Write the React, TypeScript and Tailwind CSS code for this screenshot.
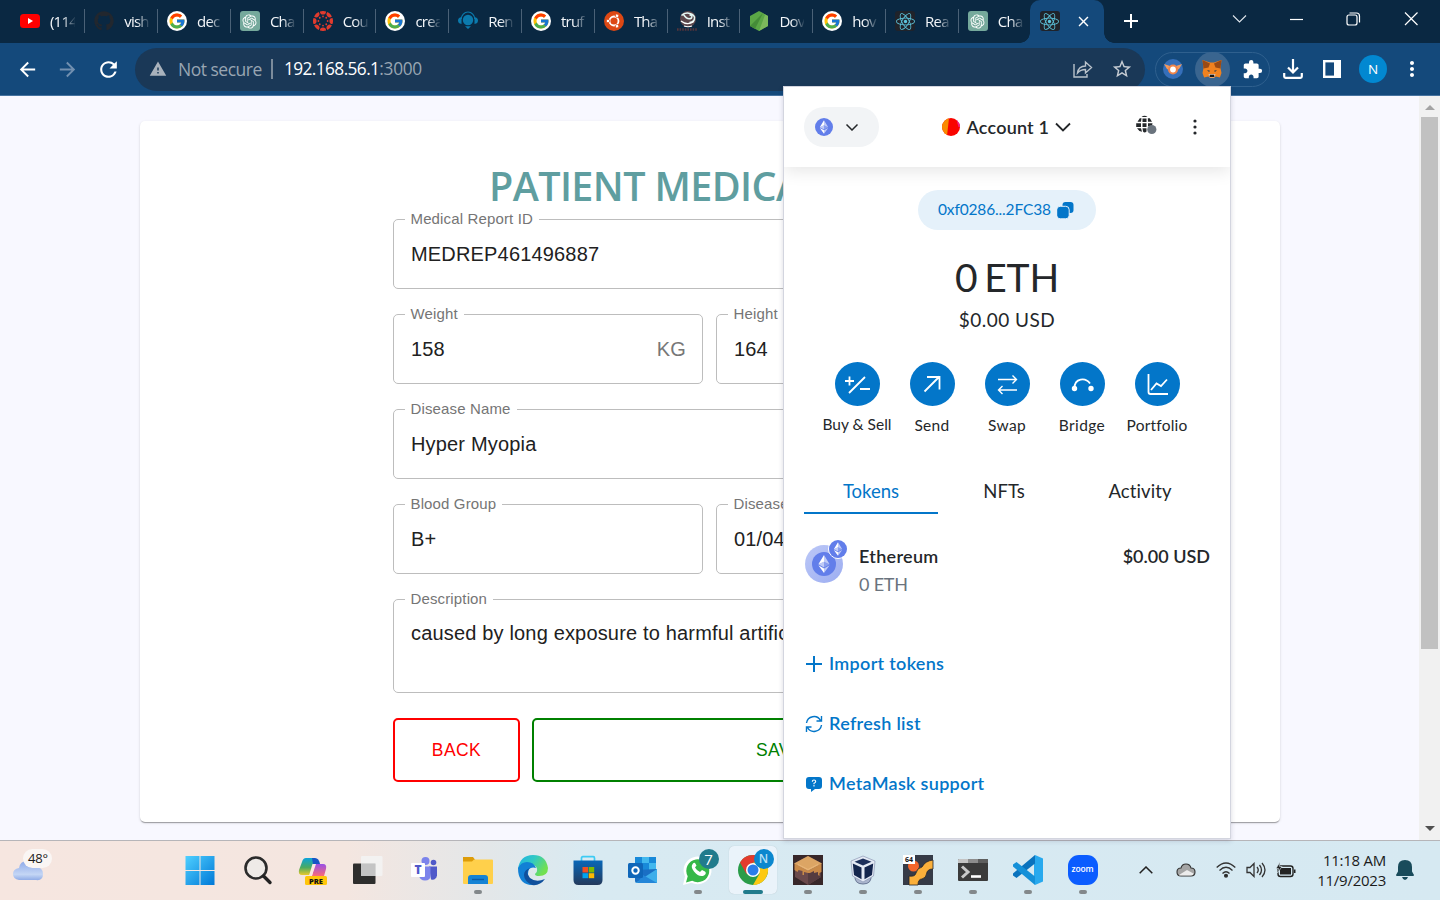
import React from "react";
import {
  MdArrowBack,
  MdArrowForward,
  MdRefresh,
  MdWarning,
  MdStarBorder,
  MdExtension,
  MdMoreVert,
  MdAdd,
  MdClose,
} from "react-icons/md";
import { FaGithub, FaReact } from "react-icons/fa";
import { FcGoogle } from "react-icons/fc";
import { RiOpenaiFill } from "react-icons/ri";

/* ---------- favicons ---------- */

const YouTube = () => (
  <svg viewBox="0 0 20 20" className="h-5 w-5">
    <rect y="3" width="20" height="14" rx="3.5" fill="#f00" />
    <path d="M8 7l5 3-5 3z" fill="#fff" />
  </svg>
);
const GitHub = () => <FaGithub className="h-5 w-5 text-[#22272e]" />;
const Google = () => (
  <span className="flex h-5 w-5 items-center justify-center rounded-full bg-white">
    <FcGoogle className="h-[18px] w-[18px]" />
  </span>
);
const OpenAI = () => (
  <span className="flex h-5 w-5 items-center justify-center rounded-[3px] bg-[#75a99c]">
    <RiOpenaiFill className="h-[17px] w-[17px] text-white" />
  </span>
);
const Canvas = () => (
  <svg viewBox="-10 -10 20 20" className="h-5 w-5" fill="#e23b2e">
    {[0, 45, 90, 135, 180, 225, 270, 315].map((a) => (
      <g key={a} transform={`rotate(${a})`}>
        <path d="M-3.100-9.500A10 10 0 0 1 3.100-9.500A3.100 3.100 0 0 1-3.100-9.500z" />
        <circle cy="-4.600" r="0.900" />
      </g>
    ))}
  </svg>
);
const Remix = () => (
  <svg viewBox="0 0 20 20" className="h-5 w-5" fill="#0b7aad">
    <circle cx="10" cy="9" r="5.200" />
    <path d="M3.300 8a6.700 7 0 0 1 13.400 0" fill="none" stroke="#0b7aad" strokeWidth="1.200" />
    <path d="M3.500 6v7q-3.500-.5-3.500-3.500T3.500 6zM16.500 6v7q3.500-.5 3.500-3.500T16.500 6zM7 15.200h6L10 18z" />
  </svg>
);
const Ubuntu = () => (
  <svg viewBox="-10 -10 20 20" className="h-5 w-5">
    <circle r="10" fill="#dd4814" />
    <circle r="4.500" fill="none" stroke="#fff" strokeWidth="1.800" />
    {[0, 120, 240].map((a) => (
      <circle key={a} cx="-6" r="1.700" fill="#fff" stroke="#dd4814" strokeWidth="0.700" transform={`rotate(${a})`} />
    ))}
  </svg>
);
const Truffle = () => (
  <svg viewBox="0 0 20 20" className="h-5 w-5">
    <ellipse cx="11" cy="8" rx="8" ry="8" fill="#5b454a" />
    <path d="M4.500 4.500A7.500 6 0 0 1 17.500 6q.5 5-5 5.500M6.500 3.500q4 6 8 3.500 1.500-2.500-2-3" fill="none" stroke="#e3f7f4" strokeWidth="1.500" />
    <path d="M4 10q6 5 13 .5M7 15q4 1.500 8 0" stroke="#fff" strokeWidth="1.200" fill="none" />
    <path d="M0 18.500h20" stroke="#54353c" strokeWidth="2.400" strokeDasharray="1.600 1" />
  </svg>
);
const Node = () => (
  <svg viewBox="0 0 20 20" className="h-5 w-5">
    <path d="M10 0l9 5v10l-9 5-9-5V5z" fill="#5ba746" />
    <path d="M10 0l9 5v10l-9 5 6-16z" fill="#7cb95c" />
    <path d="M1 15L14 2l-8 16z" fill="#458c38" />
  </svg>
);
const ReactFav = () => (
  <span className="flex h-5 w-5 items-center justify-center rounded-[3px] bg-[#20232a]">
    <FaReact className="h-[19px] w-[19px] text-[#5dc5dd]" />
  </span>
);

const tabs: { label: string; icon: React.ReactNode }[] = [
  { label: "(114", icon: <YouTube /> },
  { label: "vish", icon: <GitHub /> },
  { label: "dec", icon: <Google /> },
  { label: "Cha", icon: <OpenAI /> },
  { label: "Cou", icon: <Canvas /> },
  { label: "crea", icon: <Google /> },
  { label: "Ren", icon: <Remix /> },
  { label: "truf", icon: <Google /> },
  { label: "Tha", icon: <Ubuntu /> },
  { label: "Inst", icon: <Truffle /> },
  { label: "Dov", icon: <Node /> },
  { label: "hov", icon: <Google /> },
  { label: "Rea", icon: <ReactFav /> },
  { label: "Cha", icon: <OpenAI /> },
];

function TabStrip() {
  return (
    <div className="flex h-[43px] bg-[#0a2842] pl-[12.5px] text-[#f4f7fa]">
      {tabs.map((t, i) => (
        <div
          key={i}
          className={
            "flex h-[42px] w-[72.8px] shrink-0 items-center " + (i === 0 ? "pl-[7.5px]" : "pl-[9px]")
          }
        >
          <span className="shrink-0">{t.icon}</span>
          <span className="ml-2.5 w-[25px] text-[15px] leading-5 tracking-[-0.8px] whitespace-nowrap [mask-image:linear-gradient(to_right,black_50%,transparent_105%)]">
            {t.label}
          </span>
          {i < 13 && <span className="ml-auto h-6 w-px bg-[#4a6177]" />}
        </div>
      ))}
      <div className="relative -ml-[1.7px] flex h-[43px] w-[74px] shrink-0 items-center rounded-t-[10px] bg-[#14497b] pb-px pl-2.5">
        <span className="absolute bottom-0 -left-2.5 h-2.5 w-2.5 bg-[radial-gradient(circle_at_0_0,transparent_9.5px,#14497b_10px)]" />
        <span className="absolute -right-2.5 bottom-0 h-2.5 w-2.5 bg-[radial-gradient(circle_at_100%_0,transparent_9.5px,#14497b_10px)]" />
        <ReactFav />
        <MdClose className="ml-[15px] h-[17px] w-[17px] text-white" />
      </div>
      <MdAdd className="mt-[9px] ml-[15px] h-6 w-6 shrink-0 text-white" />
      <div className="ml-auto flex h-[38px] items-center">
        <svg viewBox="0 0 58 38" className="h-[38px] w-[58px]" fill="none" stroke="#dfe6ec" strokeWidth="1.1">
          <path d="M23 15.500l6.500 6.500L36 15.500" />
        </svg>
        <svg viewBox="0 0 57 38" className="h-[38px] w-[57px]" fill="none" stroke="#fff" strokeWidth="1.2">
          <path d="M22 19.500h13" />
        </svg>
        <svg viewBox="0 0 57 38" className="h-[38px] w-[57px]" fill="none" stroke="#fff" strokeWidth="1.2">
          <rect x="22" y="15" width="10" height="10" rx="2" />
          <path d="M24.500 13h7a3 3 0 0 1 3 3v6.500" />
        </svg>
        <svg viewBox="0 0 58 38" className="h-[38px] w-[58px]" fill="none" stroke="#fff" strokeWidth="1.2">
          <path d="M23 12.500l12.500 12.500M35.500 12.500L23 25" />
        </svg>
      </div>
    </div>
  );
}

/* ---------- toolbar ---------- */

const Fox = () => (
  <svg viewBox="0 0 20 20" className="h-5 w-5">
    <path d="M.5 1L8 3.500h4L19.500 1l-1 8 1 5-1.600 4.500-4-1-2.200 1.500H8.300l-2.200-1.500-4 1L.5 14l1-5z" fill="#f0821f" />
    <path d="M.5 1L8 4.500l-1.500 4-5 1zM19.500 1L12 4.500l1.500 4 5 1z" fill="#9a4a14" />
    <path d="M5 11l3 .7-1 1.300zM15 11l-3 .7 1 1.300z" fill="#2b3b4b" />
    <path d="M6.500 15h7l-1.200 3.500H7.700z" fill="#d5bfb2" />
    <path d="M8 15.700h4l.4 2.300H7.600z" fill="#161616" />
  </svg>
);

function Toolbar() {
  return (
    <div className="flex h-[53px] items-center border-b border-[#4673a0] bg-[#14497b] pl-[7px] text-white">
      <div className="flex w-10 justify-center"><MdArrowBack className="h-[23px] w-[23px]" /></div>
      <div className="flex w-10 justify-center"><MdArrowForward className="h-[23px] w-[23px] text-[#7290b0]" /></div>
      <div className="flex w-[42px] justify-center"><MdRefresh className="h-[25px] w-[25px]" /></div>
      <div className="ml-[6px] flex h-[43px] w-[1010px] items-center rounded-full bg-[#1a3857] pl-[14px]">
        <MdWarning className="h-[18px] w-[18px] text-[#a9b2bc]" />
        <span className="ml-[11px] w-[83px] text-[17.5px] tracking-[-0.5px] whitespace-nowrap text-[#98a5b2]">Not secure</span>
        <span className="ml-[10px] h-5 w-0.5 bg-[#7b8b9b]" />
        <span className="ml-[11px] text-[17.3px] tracking-[-0.6px] whitespace-nowrap">
          192.168.56.1<span className="tracking-[-0.3px] text-[#98a5b2]">:3000</span>
        </span>
        <svg viewBox="0 0 20 20" className="ml-auto h-5 w-5" fill="none" stroke="#b9c2cb" strokeWidth="1.4">
          <path d="M1 5v13h13v-3" />
          <path d="M4.500 14q1-7 8-7V3l6 5.500-6 5.500v-3.500q-5 0-8 3.500z" />
        </svg>
        <MdStarBorder className="mr-3 ml-[18px] h-[22px] w-[22px] text-[#c6ccd3]" />
      </div>
      <div className="ml-2.5 flex h-[35px] w-[115px] items-center rounded-full border border-[#2f608e]">
        <div className="flex w-[33px] justify-center">
          <svg viewBox="0 0 20 20" className="h-5 w-5">
            <circle cx="10" cy="10" r="10" fill="#356fba" />
            <path d="M1 5l9 3 9-3-3 5-2 1H6L4 10z" fill="#f39a5c" />
            <circle cx="10" cy="10.500" r="5" fill="#f0844a" />
            <circle cx="10" cy="10.500" r="2.900" fill="#fff" />
          </svg>
        </div>
        <div className="flex w-[46px] justify-center">
          <span className="flex h-[35px] w-[35px] items-center justify-center rounded-full bg-[#3a658f]"><Fox /></span>
        </div>
        <div className="flex w-[34px] justify-center"><MdExtension className="h-[21px] w-[21px]" /></div>
      </div>
      <div className="flex w-[46px] justify-center">
        <svg viewBox="0 0 20 20" className="h-5 w-5" fill="none" stroke="#fff" strokeWidth="2.200">
          <path d="M10 0v13M5 8.500l5 5 5-5M1.200 14v3.500q0 1.300 1.300 1.300h15q1.300 0 1.300-1.300V14" />
        </svg>
      </div>
      <div className="flex w-8 justify-center">
        <svg viewBox="0 0 18 18" className="h-[18px] w-[18px]">
          <rect x="1.200" y="1.200" width="15.600" height="15.600" fill="none" stroke="#fff" strokeWidth="2.400" />
          <path d="M11 0h7v18h-7z" fill="#fff" />
        </svg>
      </div>
      <div className="flex w-[50px] justify-center">
        <span className="flex h-7 w-7 items-center justify-center rounded-full bg-[#0288d1] text-[13.500px]">N</span>
      </div>
      <div className="flex w-7 justify-center"><MdMoreVert className="h-6 w-6" /></div>
    </div>
  );
}

/* ---------- form page ---------- */

function Field({ label, value, unit, size }: { label: string; value: string; unit?: string; size: string }) {
  return (
    <fieldset
      className={
        "-mt-[7px] min-w-0 rounded-[5px] border border-[#bdbdbd] pl-[10.5px] font-['Liberation_Sans',sans-serif] " + size
      }
    >
      <legend className="h-[15px] px-[6px] text-[15px] leading-[13px] tracking-[0.14px] whitespace-nowrap text-[#757575]">{label}</legend>
      <div className="flex pt-[15px] pr-[16px] pl-[6.500px] text-[20px] leading-6 tracking-[0.17px] whitespace-nowrap text-[#212121]">
        <span>{value}</span>
        {unit && <span className="ml-auto text-[#777]">{unit}</span>}
      </div>
    </fieldset>
  );
}

function FormPage() {
  return (
    <div className="flex h-[744px] overflow-hidden bg-[#f8f8ff]">
      <main className="flex flex-1 items-start pt-[25px] pl-[140px]">
        <section className="h-[701px] w-[1140px] rounded-[5px] bg-white px-[253px] pt-[42px] shadow-[0_2px_1px_-1px_rgba(0,0,0,0.2),0_1px_1px_0_rgba(0,0,0,0.14),0_1px_3px_0_rgba(0,0,0,0.12)]">
          <h1 className="h-14 pl-[96px] text-[39.500px] leading-[47px] font-semibold tracking-[-0.6px] whitespace-nowrap text-[#5f9ea0]">PATIENT MEDICAL</h1>
          <div className="flex w-[634px] flex-col gap-[25px]">
            <Field label="Medical Report ID" value="MEDREP461496887" size="h-[77px]" />
            <div className="flex gap-[13px]">
              <Field label="Weight" value="158" unit="KG" size="h-[77px] w-[310px]" />
              <Field label="Height" value="164" size="h-[77px] w-[311px]" />
            </div>
            <Field label="Disease Name" value="Hyper Myopia" size="h-[77px]" />
            <div className="flex gap-[13px]">
              <Field label="Blood Group" value="B+" size="h-[77px] w-[310px]" />
              <Field label="Disease Date" value="01/04" size="h-[77px] w-[311px]" />
            </div>
            <Field label="Description" value="caused by long exposure to harmful artificial" size="h-[101px] [&>div]:pt-[14px]" />
            <div className="flex gap-3 font-['Liberation_Sans',sans-serif] text-[17.500px] tracking-[0.4px]">
              <button className="h-16 w-[127px] rounded-[5px] border-2 border-[#ff0000] text-[#ff0000]">BACK</button>
              <button className="h-16 flex-1 rounded-[5px] border-2 border-[#008000] text-[#008000]">SAVE</button>
            </div>
          </div>
        </section>
      </main>
      <div className="flex w-[21px] flex-col items-center bg-[#f1f1f1]">
        <svg viewBox="0 0 20 21" className="h-[21px] w-5"><path d="M5 14l5-5 5 5z" fill="#a3a3a3" /></svg>
        <div className="h-[532px] w-[17px] bg-[#c1c1c1]" />
        <svg viewBox="0 0 20 21" className="mt-auto h-[23px] w-5"><path d="M5 8h10l-5 5z" fill="#505050" /></svg>
      </div>
    </div>
  );
}

/* ---------- wallet popup ---------- */

const Eth = ({ className }: { className: string }) => (
  <svg viewBox="0 0 32 32" className={className}>
    <circle cx="16" cy="16" r="16" fill="#627eea" />
    <path d="M16 4v9l7.500 3.300zM16 21.900V28l7.500-10.400z" fill="#fff" fillOpacity="0.6" />
    <path d="M16 4L8.500 16.300 16 13zM16 28v-6.100l-7.500-4.300z" fill="#fff" />
    <path d="M16 20.500l7.500-4.200L16 13z" fill="#fff" fillOpacity="0.25" />
    <path d="M8.500 16.300l7.500 4.200V13z" fill="#fff" fillOpacity="0.6" />
  </svg>
);

const actions: { label: string; d: React.ReactNode; text: string }[] = [
  { label: "Buy & Sell", text: "mt-2 tracking-[0px]", d: <path d="M10 19h9M14.500 14.500v9M14 31l16-16M25 27h10" /> },
  { label: "Send", text: "mt-[9px] tracking-[0.3px]", d: <path d="M14.500 29.500l15-15M17 15h12.500v12.500" /> },
  {
    label: "Swap",
    text: "mt-[9px] tracking-[0.3px]",
    d: <path strokeWidth="1.4" d="M13 17.500h18.500M27.500 13.500l4 4-4 4M32 28H13.500M17.500 24l-4 4 4 4" />,
  },
  {
    label: "Bridge",
    text: "mt-[9px] tracking-[0.4px]",
    d: (
      <>
        <path d="M14.500 26c0-10 11-11 15.500-4.500" />
        <circle cx="14.500" cy="26.500" r="1.800" fill="#fff" />
        <circle cx="31" cy="26.500" r="1.800" fill="#fff" />
      </>
    ),
  },
  {
    label: "Portfolio",
    text: "mt-[9px] tracking-[0.2px]",
    d: <path d="M13.500 12v18q0 2 2 2H33M16 28l5.500-6.500 4.500 2.500 6-6.500" />,
  },
];

function Wallet() {
  return (
    <div className="absolute top-[86px] left-[783px] h-[753px] w-[448px] border border-[#d3d5df] bg-white font-['Lato',sans-serif] text-[#24272a] shadow-[0_2px_5px_rgba(40,40,80,0.18)]">
      <div className="flex h-20 items-center pl-5 shadow-[0_4px_16px_rgba(0,0,0,0.1)] [clip-path:inset(0_0_-30px_0)]">
        <div className="flex h-10 w-[75px] items-center rounded-full bg-[#f2f4f6] pl-[11px]">
          <Eth className="h-[18px] w-[18px]" />
          <svg viewBox="0 0 14 8" className="ml-[11.500px] h-2 w-[14px]" fill="none" stroke="#24272a" strokeWidth="1.500"><path d="M1.500 1.500L7 7l5.500-5.500" /></svg>
        </div>
        <svg viewBox="0 0 18 18" className="ml-[63px] h-[18px] w-[18px]">
          <clipPath id="acct"><circle cx="9" cy="9" r="9" /></clipPath>
          <g clipPath="url(#acct)">
            <rect width="18" height="18" fill="#f90400" />
            <path d="M0 0h7L5 18H0z" fill="#f98a00" />
            <path d="M14 0h4v9h-1.500z" fill="#f0208c" />
          </g>
        </svg>
        <span className="ml-[6.500px] w-[82px] text-[18px] leading-6 font-semibold tracking-[0.2px] whitespace-nowrap">Account 1</span>
        <svg viewBox="0 0 16 10" className="ml-[6.500px] h-2.5 w-4" fill="none" stroke="#24272a" strokeWidth="1.800"><path d="M1 1.500l7 7 7-7" /></svg>
        <svg viewBox="0 0 22 20" className="-mt-1 ml-[64px] h-5 w-[22px]" fill="#24272a">
          <path d="M7.500 3.500h4v3.500h-4zM7.500 8.300h4V12h-4zM1.200 8.300H6V12H1.200zM13 8.300h4.500l-.5 3h-4zM2.500 6.700l2.300-3.500h1.700L6 6.700zM12.800 3.200h2l2.200 3.500h-4zM6.500 2q3-2.500 6 0zM2 13.300h4l1 3.500q-3.500-.7-5-3.500zM7.500 13.300h4v3.200q-2 2-3.500 0z" />
          <circle cx="16.800" cy="14.500" r="4.600" fill="#6a737d" />
        </svg>
        <svg viewBox="0 0 4 16" className="ml-[35.500px] h-4 w-1" fill="#24272a"><circle cx="2" cy="2" r="1.600" /><circle cx="2" cy="8" r="1.600" /><circle cx="2" cy="14" r="1.600" /></svg>
      </div>

      <div className="flex flex-col items-center pt-[23px]">
        <div className="flex h-10 w-[178px] items-center rounded-full bg-[#e5f1fa] pl-5 text-[#0376c9]">
          <span className="w-[114px] text-[15.500px] tracking-[-0.15px] whitespace-nowrap">0xf0286...2FC38</span>
          <svg viewBox="0 0 17 17" className="ml-[5px] h-[17px] w-[17px]" fill="#0376c9">
            <rect x="5.500" width="11" height="11" rx="3" />
            <rect x="-.3" y="4.300" width="12.500" height="12.500" rx="3.500" stroke="#e5f1fa" strokeWidth="1" />
          </svg>
        </div>
        <div className="mt-[22px] flex h-[50px] w-[104px] items-center justify-center text-[39px] leading-[50px] tracking-[-0.2px] [word-spacing:-3px] whitespace-nowrap">0 ETH</div>
        <div className="mt-1 text-[19px] leading-7 tracking-[0.5px]">$0.00 USD</div>
        <div className="mt-7 flex">
          {actions.map((a) => (
            <div key={a.label} className="flex h-[75px] w-[75px] flex-col items-center">
              <svg viewBox="0 0 45 44" className="h-11 w-[45px] shrink-0" fill="none" stroke="#fff" strokeWidth="1.800">
                <ellipse cx="22.500" cy="22" rx="22.500" ry="22" fill="#0376c9" stroke="none" />
                {a.d}
              </svg>
              <span className={"text-[15.500px] leading-5 whitespace-nowrap " + a.text}>{a.label}</span>
            </div>
          ))}
        </div>
      </div>

      <div className="mt-[31px] flex pl-5 text-center text-[18.500px] leading-[46px]">
        <div className="h-[46px] w-[134px] border-b-2 border-[#0376c9] text-[#0376c9]">Tokens</div>
        <div className="w-[132px]">NFTs</div>
        <div className="w-[140px] tracking-[0.1px]">Activity</div>
      </div>

      <div className="mt-[23px] flex h-[60px] pr-[20px] pl-5">
        <div className="relative h-[46px] w-[45px]">
          <div className="mt-2 ml-px flex h-[38px] w-[38px] items-center justify-center rounded-full bg-[linear-gradient(135deg,#bcc8f7,#9cadf1)]">
            <Eth className="h-6 w-6" />
          </div>
          <span className="absolute top-[2px] left-[24px] rounded-full border border-white"><Eth className="h-[18px] w-[18px]" /></span>
        </div>
        <div className="ml-[10px] flex flex-col">
          <span className="mt-[5px] text-[18px] leading-7 font-semibold tracking-[0.3px]">Ethereum</span>
          <span className="text-[18px] leading-7 tracking-[-0.2px] text-[#6a737d]">0 ETH</span>
        </div>
        <span className="mt-[5px] ml-auto text-[18px] leading-7 font-semibold">$0.00 USD</span>
      </div>

      <div className="mt-[37px] flex flex-col pl-[22px] text-[18px] font-semibold tracking-[0.3px] text-[#0376c9]">
        <div className="flex h-[60px] items-center gap-[7px]">
          <svg viewBox="0 0 16 16" className="h-4 w-4" stroke="#0376c9" strokeWidth="2"><path d="M8 0v16M0 8h16" /></svg>
          <span className="-mt-[2px]">Import tokens</span>
        </div>
        <div className="flex h-[60px] items-center gap-[7px]">
          <svg viewBox="0 0 16 16" className="h-4 w-4 overflow-visible" fill="none" stroke="#0376c9" strokeWidth="1.400">
            <path d="M.5 7A7.500 7.500 0 0 1 14.500 4.500M15.500 0v5h-5M15.500 9A7.500 7.500 0 0 1 1.500 11.500M.5 16v-5h5" />
          </svg>
          <span className="-mt-[2px]">Refresh list</span>
        </div>
        <div className="flex h-[60px] items-center gap-[7px]">
          <svg viewBox="0 0 16 16" className="h-4 w-4">
            <path d="M3 1h10q3 0 3 3v6q0 3-3 3h-4l-4 3v-3H3q-3 0-3-3V4q0-3 3-3z" fill="#0376c9" />
            <path d="M6.300 5.700q0-1.700 1.700-1.700t1.700 1.500q0 1-1.700 1.800v1M8 9v1.500" fill="none" stroke="#fff" strokeWidth="1.100" />
          </svg>
          <span className="-mt-[2px]">MetaMask support</span>
        </div>
      </div>
    </div>
  );
}

/* ---------- taskbar ---------- */

const S = ({ children }: { children: React.ReactNode }) => (
  <svg viewBox="0 0 30 30" className="h-[30px] w-[30px] overflow-visible">{children}</svg>
);

const apps: { icon: React.ReactNode; running?: boolean; active?: boolean }[] = [
  {
    icon: (
      <S>
        <linearGradient id="win" x1="0" y1="0" x2="1" y2="1"><stop stopColor="#4fd0ff" /><stop offset="1" stopColor="#0078d7" /></linearGradient>
        <path d="M.5 1h14v14h-14zM15.500 1h14v14h-14zM.5 16h14v14h-14zM15.500 16h14v14h-14z" fill="url(#win)" />
      </S>
    ),
  },
  {
    icon: (
      <S>
        <circle cx="13" cy="13" r="10.500" fill="#eeeae7" stroke="#2b2b2b" strokeWidth="2.600" />
        <path d="M20.500 21l6.500 6.500" stroke="#222" strokeWidth="3.400" strokeLinecap="round" />
      </S>
    ),
  },
  {
    icon: (
      <S>
        <linearGradient id="cpa" x1="0" y1="0" x2="0" y2="1"><stop stopColor="#0aa3dc" /><stop offset=".55" stopColor="#49aa62" /><stop offset="1" stopColor="#e9c92c" /></linearGradient>
        <linearGradient id="cpb" x1="0" y1="0" x2="0" y2="1"><stop stopColor="#9750e8" /><stop offset="1" stopColor="#fb6b77" /></linearGradient>
        <path d="M8 3h9l-5 17H4q-4 0-3-5l3-8q1-4 4-4z" fill="url(#cpa)" />
        <path d="M14 3h3q4 0 5 6h-7z" fill="#1655c5" />
        <path d="M17 9h8q4 0 3 5l-2 7H14z" fill="url(#cpb)" />
        <path d="M14.500 9H18l-4 11.500h-3z" fill="#fbe8e2" />
        <rect x="7" y="21" width="22" height="9" rx="1.500" fill="#ffc60a" />
        <text x="18" y="28.500" textAnchor="middle" fontSize="7.500" fontWeight="800" fill="#111" fontFamily="Open Sans">PRE</text>
      </S>
    ),
  },
  {
    icon: (
      <S>
        <rect y="8.500" width="22.500" height="20.500" rx="1" fill="#2e2e2d" />
        <rect x="8" y="1" width="21.500" height="20" rx="1" fill="#f3f3f3" fillOpacity=".9" />
        <path d="M8 8.500h14.500V21H8z" fill="#c4c4c4" />
      </S>
    ),
  },
  {
    icon: (
      <S>
        <circle cx="17.500" cy="6" r="4" fill="#7b83eb" />
        <circle cx="25.500" cy="7.500" r="2.800" fill="#5059c9" />
        <path d="M21 11.500h8v9q-1 5-6 4z" fill="#5059c9" />
        <path d="M11 11.500h11.500v9q0 5-5.500 5-5 0-6-5z" fill="#7b83eb" />
        <rect x="3" y="8" width="14" height="14" rx="1" fill="#fff" />
        <text x="10" y="19" textAnchor="middle" fontSize="12" fontWeight="800" fill="#5059c9" fontFamily="Open Sans">T</text>
      </S>
    ),
  },
  {
    running: true,
    icon: (
      <S>
        <path d="M0 2h10l3 4h-1v5H0z" fill="#dd9c09" />
        <path d="M0 6.500h9l2-2h18q1 0 1 1V28q0 1-1 1H1q-1 0-1-1z" fill="#ffd04b" />
        <path d="M5 29v-6q0-3 3-3h14q3 0 3 3v6z" fill="#1583d5" />
        <path d="M9 24.500h12" stroke="#0b5ca8" strokeWidth="1.400" />
      </S>
    ),
  },
  {
    icon: (
      <S>
        <linearGradient id="ed" x1="0" y1="0" x2="1" y2=".5"><stop stopColor="#1eb1e7" /><stop offset=".5" stopColor="#31c9c3" /><stop offset="1" stopColor="#72e04f" /></linearGradient>
        <path d="M0 14Q2 0 15 0q13 0 15 13 0 8-9 8-4 0-4-2 5-5-1-9-7-4-16 4z" fill="url(#ed)" />
        <path d="M0 13q3-6 9-6 7 0 9 6-8-2-8 6 0 7 8 10-3 1-6 1Q0 28 0 13z" fill="#1280d5" />
        <path d="M12 13q-5 4 0 10 6 5 15 1-5 7-13 6-8-4-8-10 0-5 6-7z" fill="#10509c" />
      </S>
    ),
  },
  {
    icon: (
      <S>
        <path d="M8.500 7V3q0-1.300 1.300-1.300h10.400q1.300 0 1.300 1.300v4" fill="none" stroke="#3ccbf4" strokeWidth="1.700" />
        <linearGradient id="st" x1="0" y1="0" x2="0" y2="1"><stop stopColor="#0967b8" /><stop offset="1" stopColor="#243a5c" /></linearGradient>
        <path d="M.5 5.500h29V25q0 5-5 5h-19q-5 0-5-5z" fill="url(#st)" />
        <path d="M9.500 12H15v5.500H9.500z" fill="#f25022" /><path d="M15.700 12h5.500v5.500h-5.500z" fill="#7fba00" />
        <path d="M9.500 18.200H15v5H9.500z" fill="#00a4ef" /><path d="M15.700 18.200h5.500v5h-5.500z" fill="#ffb900" />
      </S>
    ),
  },
  {
    icon: (
      <S>
        <path d="M7 2h21v14H7z" fill="#1889d9" /><path d="M14 2h7v6h-7zM21 8h7v7h-7z" fill="#42b8ee" />
        <path d="M7 15l22-1v14H9q-2 0-2-2z" fill="#1a6fc4" />
        <path d="M7.500 28h21.500V14z" fill="#3eaeea" /><path d="M15 20l14 8H9z" fill="#2486d8" />
        <rect x="0" y="8" width="15" height="15" rx="1.500" fill="#0f66b9" />
        <circle cx="7.500" cy="15.500" r="3.200" fill="none" stroke="#fff" strokeWidth="2" />
      </S>
    ),
  },
  {
    running: true,
    icon: (
      <span className="relative flex h-[30px] w-[30px] items-center justify-center">
        <svg viewBox="0 0 30 30" className="h-[30px] w-[30px] overflow-visible">
          <path d="M0 30l2-8.500A14 13.800 0 1 1 8.500 27.800z" fill="#fff" />
          <path d="M3 27.500l1.700-6.200A11.500 11.500 0 1 1 9.200 25.800z" fill="#36b848" />
          <path d="M10 8.500q-3 3 1 8 5 6 10 4 3-2 1-4l-3-1.500-2 2q-3-1-5-4.500l1.500-2L12 8q-1-.7-2 .5z" fill="#fff" />
        </svg>
        <span className="absolute -top-[6px] left-[16px] flex h-5 w-5 items-center justify-center rounded-full bg-[#217b8c] text-[15px] leading-5 text-white">7</span>
      </span>
    ),
  },
  {
    active: true,
    icon: (
      <span className="relative">
        <S>
          <circle cx="15" cy="15" r="15" fill="#2a9c49" />
          <path d="M2 7.500Q6 0 15 0q9 0 13 7.500H15L8.500 19z" fill="#e33b2e" />
          <path d="M15 7.500h13A15 15 0 0 1 15 30l6.500-11.200z" fill="#fdc912" />
          <circle cx="15" cy="15" r="7" fill="#fff" /><circle cx="15" cy="15" r="5.500" fill="#2b7de9" />
        </S>
        <span className="absolute -top-[6px] left-[16px] flex h-5 w-5 items-center justify-center rounded-full bg-[#0b87ce] text-[12px] leading-5 font-semibold text-[#b9e0f5]">N</span>
      </span>
    ),
  },
  {
    running: true,
    icon: (
      <S>
        <path d="M0 0h30v30H0z" fill="#37272a" />
        <path d="M15 1l13 7v14l-13 8-13-8V8z" fill="#6b4a4c" />
        <path d="M15 15.500V30l13-8V8z" fill="#553c40" />
        <path d="M1.500 8.500L15 16l13.500-7.500V17l-2 1v3l-1.500-1v-3l-4 1v-2l-4 2-2 0-4-1v3l-1.500 0v-4l-4-1-1 2-3-2z" fill="#c98a48" />
        <path d="M15 1l14 7.500L15 16 1 8.500z" fill="#dca564" />
        <path d="M5 9.500l10 5 10-5" fill="none" stroke="#eebc80" strokeWidth=".8" />
      </S>
    ),
  },
  {
    running: true,
    icon: (
      <S>
        <path d="M7 20q-1 9 8 9t8-9z" fill="#aab5cd" stroke="#697795" strokeWidth="1" />
        <path d="M15 1l12 5-1.500 15L15 27 4.500 21 3 6z" fill="#e4eaf5" stroke="#8c98b5" strokeWidth=".7" />
        <path d="M15 3.500l8.500 3.300L15 10.500 6.500 6.800z" fill="#1c2f5b" />
        <path d="M4.800 8.500l8.700 4v11.700L6 20zM25.200 8.500l-8.700 4v11.700L24 20z" fill="#14264e" />
      </S>
    ),
  },
  {
    running: true,
    icon: (
      <S>
        <path d="M0 0h30v30H0z" fill="#363b47" />
        <circle cx="10.500" cy="11" r="5.500" fill="#f4662b" />
        <path d="M30 5v9q-6 0-6.500 5Q23 23 19 24q-4 0-4 6H6v-9q6 1 7-3 1-5 6-6 3-6 11-7z" fill="#fbb03b" stroke="#22242c" strokeWidth=".8" />
        <rect width="12" height="9" fill="#fff" />
        <text x="6" y="7" textAnchor="middle" fontSize="7" fontWeight="700" fill="#111" fontFamily="Open Sans">64</text>
      </S>
    ),
  },
  {
    running: true,
    icon: (
      <S>
        <rect y="4" width="30" height="22" rx="1" fill="#3b3b3b" />
        <path d="M0 8V5q0-1 1-1h9v4z" fill="#c4c4c4" /><path d="M10 4h10v4H10z" fill="#8d8d8d" /><path d="M20 4h9q1 0 1 1v3H20z" fill="#5e5e5e" />
        <path d="M4 11.500l6 5.500-6 5.500" fill="none" stroke="#c9c9c9" strokeWidth="3" />
        <path d="M13 21.500h10" stroke="#fff" strokeWidth="2.600" />
      </S>
    ),
  },
  {
    running: true,
    icon: (
      <S>
        <path d="M22 0l8 3.500v23L22 30 21 22V8z" fill="#28a9ee" />
        <path d="M22 0v8.500L3.500 23 0 20.500v-2z" fill="#0a72bd" />
        <path d="M22 30v-8.500L3.500 7 0 9.500v2z" fill="#1590d8" />
      </S>
    ),
  },
  {
    running: true,
    icon: (
      <span className="flex h-[30px] w-[30px] items-center justify-center rounded-[11px] bg-[#0b5cff] pb-0.5 text-[8.500px] font-semibold tracking-[-0.1px] text-white">zoom</span>
    ),
  },
];

function Taskbar() {
  return (
    <div className="flex h-[60px] items-stretch border-t border-[#b6b5b9] bg-[linear-gradient(90deg,#f6e6e0_0%,#f4e6e0_24%,#e3e7e9_34%,#d8eaf2_41%,#d6e9f2_100%)]">
      <div className="relative w-[173px] shrink-0">
        <svg viewBox="0 0 32 22" className="absolute top-[18px] left-[12px] h-[22px] w-8">
          <linearGradient id="cl" x1="0" y1="0" x2="0" y2="1"><stop stopColor="#8ea9e8" /><stop offset=".7" stopColor="#c4d6f5" /><stop offset="1" stopColor="#8fabe6" /></linearGradient>
          <path d="M7 21q-6-1-6-6t6-6q1-7 8-7 6 0 8 6 8 0 8 7t-7 6z" fill="url(#cl)" />
        </svg>
        <span className="absolute top-[8px] left-[23px] flex h-[19px] w-[29px] items-center justify-center rounded-full bg-[#faf6f4] pl-[1px] text-[13px] tracking-[-0.2px] text-[#1b1b1b]">48°</span>
      </div>
      {apps.map((a, i) => (
        <div key={i} className={"flex shrink-0 justify-center " + (i === 0 ? "w-[57px] pr-[3px]" : "w-[55px]")}>
          <div
            className={
              "mt-[5px] flex h-12 w-12 flex-col items-center rounded-[5px] pt-[9px] " +
              (a.active ? "bg-[#eaf3fa] shadow-[0_0_1px_rgba(0,0,0,0.2)]" : "")
            }
          >
            {a.icon}
            {(a.active || a.running) && (
              <span className={a.active ? "mt-[5px] h-1 w-5 rounded-full bg-[#217b8c]" : "mt-[5px] h-1 w-2 rounded-full bg-[#83888b]"} />
            )}
          </div>
        </div>
      ))}
      <div className="ml-auto flex items-center pr-[26px] pb-[2px] text-[#1b1b1b]">
        <svg viewBox="0 0 14 8" className="h-2 w-[14px]" fill="none" stroke="#222" strokeWidth="1.500"><path d="M.7 7.300L7 1l6.300 6.300" /></svg>
        <svg viewBox="0 0 20 14" className="ml-[23px] h-[14px] w-5">
          <path d="M5 13q-4 0-4-4t4-4q1-4 5-4t5 4q4 0 4 4t-4 4z" fill="#a5a5a5" stroke="#333" strokeWidth="1.100" />
          <path d="M3 12l8-5 6.500 3.500q0 2-2.500 2H5q-2 0-2-.5z" fill="#ececec" />
        </svg>
        <svg viewBox="0 0 20 16" className="ml-5 h-4 w-5" fill="none" stroke="#333" strokeWidth="1.300">
          <path d="M.7 5.500q9.300-9 18.600 0M3.500 8.500q6.500-6.500 13 0M6.500 11.500q3.500-3.500 7 0" /><circle cx="10" cy="13.700" r="1.400" fill="#222" />
        </svg>
        <svg viewBox="0 0 20 16" className="ml-2.5 h-4 w-5" fill="none" stroke="#333" strokeWidth="1.300">
          <path d="M1 5.500h3l4-4v13l-4-4H1zM11 5q2.500 3 0 6M13.500 3q4 5 0 10M16 1q6 7 0 14" />
        </svg>
        <svg viewBox="0 0 20 16" className="ml-2.5 h-4 w-5">
          <rect x="2" y="4" width="15" height="10.500" rx="2.500" fill="none" stroke="#222" strokeWidth="1.400" />
          <path d="M4 6h11v6.500H4zM18 7.500h1.500v3.500H18z" fill="#222" />
          <path d="M4 0L0 6.500h2.500L1.500 11 6 4.500H3.500z" fill="#222" stroke="#d8eaf2" strokeWidth=".6" />
        </svg>
        <div className="ml-[16px] flex w-[74px] flex-col items-end text-[15px] leading-5 tracking-[-0.25px] whitespace-nowrap">
          <span>11:18 AM</span>
          <span>11/9/2023</span>
        </div>
        <svg viewBox="0 0 18 20" className="ml-[10px] h-5 w-[18px]" fill="#194b5b">
          <path d="M9 0q7 0 7 7v4.500L18 15q0 1-1 1H1q-1 0-1-1l2-3.500V7q0-7 7-7zM6 17h6q-1 3-3 3t-3-3z" />
        </svg>
      </div>
    </div>
  );
}

export default function App() {
  return (
    <div className="relative flex h-[900px] w-[1440px] flex-col overflow-hidden font-['Open_Sans',sans-serif]">
      <TabStrip />
      <Toolbar />
      <FormPage />
      <Taskbar />
      <Wallet />
    </div>
  );
}
